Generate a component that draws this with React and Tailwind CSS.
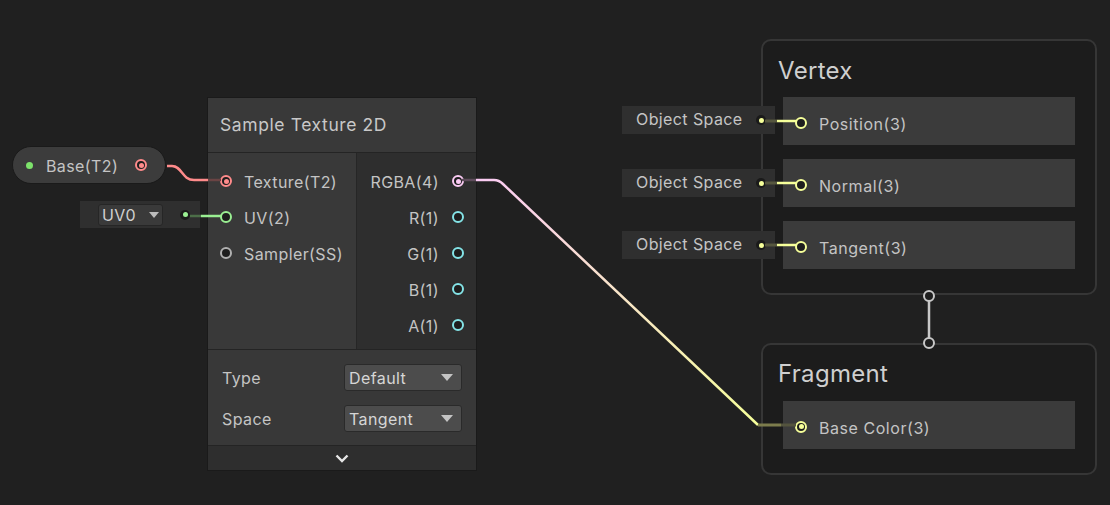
import React from 'react';

const font = { fontFamily: 'Inter, "Noto Sans", sans-serif' };

// port colours
const PINK_T2 = '#ff8b8b';
const GREEN = '#9aef92';
const YELLOW = '#f6ff9a';
const PINK_V4 = '#fbcbf4';
const CYAN = '#84e4e7';
const GREY = '#b0b0b0';

const Port = ({ color, filled }) => (
  <div
    className="w-[12px] h-[12px] rounded-full border-2 flex items-center justify-center bg-[#1e1e1e] shrink-0"
    style={{ borderColor: color }}
  >
    {filled && <div className="w-[5px] h-[5px] rounded-full" style={{ background: color }} />}
  </div>
);

const Dropdown = ({ value }) => (
  <div className="w-[118px] h-[27px] bg-[#4c4c4c] border border-[#2a2a2a] rounded-[3px] flex items-center justify-between pl-[4px] pr-[8px] text-[16px] tracking-[0.4px] text-[#d6d6d6]">
    <span>{value}</span>
    <svg width="12" height="7" viewBox="0 0 12 7">
      <path d="M0 0 L12 0 L6 7 Z" fill="#c4c4c4" />
    </svg>
  </div>
);

const SampleTexture = () => (
  <div className="absolute left-[208px] top-[98px] w-[268px] bg-[#2e2e2e] shadow-[0_0_0_1px_#1a1a1a]">
    <div className="h-[55px] bg-[#393939] flex items-center px-[12px] text-[17.5px] tracking-[0.6px] text-[#c8c8c8] border-b border-[#242424]">
      Sample Texture 2D
    </div>
    <div className="flex h-[196px]">
      <div className="w-[149px] bg-[#393939] pt-[10px] border-r border-[#262626]">
        {[
          ['Texture(T2)', PINK_T2, true],
          ['UV(2)', GREEN, false],
          ['Sampler(SS)', GREY, false],
        ].map(([label, color, filled]) => (
          <div key={label} className="h-[36px] flex items-center pl-[12px] gap-[12px] text-[16px] tracking-[0.4px] text-[#c4c4c4]">
            <Port color={color} filled={filled} />
            <span className="pt-[1px]">{label}</span>
          </div>
        ))}
      </div>
      <div className="flex-1 bg-[#2e2e2e] pt-[10px]">
        {[
          ['RGBA(4)', PINK_V4, true],
          ['R(1)', CYAN, false],
          ['G(1)', CYAN, false],
          ['B(1)', CYAN, false],
          ['A(1)', CYAN, false],
        ].map(([label, color, filled]) => (
          <div key={label} className="h-[36px] flex items-center justify-end pr-[12px] gap-[13px] text-[16px] tracking-[0.4px] text-[#c4c4c4]">
            <span className="pt-[1px]">{label}</span>
            <Port color={color} filled={filled} />
          </div>
        ))}
      </div>
    </div>
    <div className="bg-[#383838] border-t border-[#242424] px-[14px] pt-[14px] pb-[13px] flex flex-col gap-[14px]">
      <div className="flex items-center justify-between text-[16px] tracking-[0.4px] text-[#c4c4c4]">
        <span>Type</span>
        <Dropdown value="Default" />
      </div>
      <div className="flex items-center justify-between text-[16px] tracking-[0.4px] text-[#c4c4c4]">
        <span>Space</span>
        <Dropdown value="Tangent" />
      </div>
    </div>
    <div className="h-[25px] bg-[#2e2e2e] border-t border-[#242424] flex items-center justify-center">
      <svg width="14" height="9" viewBox="0 0 14 9">
        <path d="M1.5 1.5 L7 7 L12.5 1.5" fill="none" stroke="#e6e6e6" strokeWidth="2.4" />
      </svg>
    </div>
  </div>
);

const Slot = ({ label, filled }) => (
  <div className="h-[48px] bg-[#3b3b3b] flex items-center pl-[12px] pt-[3px] gap-[12px] text-[16px] tracking-[0.55px] text-[#c4c4c4]">
    <Port color={YELLOW} filled={filled} />
    <span className="pt-[2px]">{label}</span>
  </div>
);

const ObjectSpace = ({ top }) => (
  <div
    className="absolute left-[622px] w-[153px] h-[28px] bg-[#2f2f2f] flex items-center justify-between pl-[14px] pr-[9px] text-[16px] tracking-[0.4px] text-[#c4c4c4]"
    style={{ top }}
  >
    <span className="-mt-[2px]">Object Space</span>
    <div className="w-[10px] h-[10px] rounded-full bg-[#1a1a1a] flex items-center justify-center">
      <div className="w-[5px] h-[5px] rounded-full" style={{ background: YELLOW }} />
    </div>
  </div>
);

export default function App() {
  return (
    <div className="relative w-[1110px] h-[505px] bg-[#202020] overflow-hidden" style={font}>
      {/* Base property pill */}
      <div className="absolute left-[12px] top-[146px] w-[154px] h-[38px] rounded-full bg-[#3c3c3c] border border-[#1a1a1a] flex items-center pl-[13px] pr-[18px] text-[16px] tracking-[0.4px] text-[#c4c4c4]">
        <div className="w-[7px] h-[7px] rounded-full bg-[#7de36b]" />
        <span className="ml-[13px] flex-1 pt-[2px]">Base(T2)</span>
        <Port color={PINK_T2} filled />
      </div>

      {/* UV0 input */}
      <div className="absolute left-[80px] top-[201px] w-[120px] h-[27px] bg-[#2f2f2f] flex items-center pl-[18px] pr-[10px] justify-between">
        <div className="h-[22px] w-[65px] bg-[#3a3a3a] border border-[#262626] rounded-[3px] flex items-center justify-between px-[3px] text-[16px] tracking-[0.4px] text-[#d0d0d0]">
          <span>UV0</span>
          <svg width="10" height="6" viewBox="0 0 10 6">
            <path d="M0 0 L10 0 L5 6 Z" fill="#bcbcbc" />
          </svg>
        </div>
        <div className="w-[10px] h-[10px] rounded-full bg-[#1a1a1a] flex items-center justify-center">
          <div className="w-[5px] h-[5px] rounded-full bg-[#9aef92]" />
        </div>
      </div>

      <SampleTexture />

      {/* Vertex context */}
      <div className="absolute left-[761px] top-[39px] w-[336px] h-[256px] rounded-[10px] border-2 border-[#363636] bg-[#1c1c1c]">
        <div className="h-[56px] flex items-center pl-[15px] pt-[4px] text-[24px] tracking-[0.3px] text-[#cfcfcf]">Vertex</div>
        <div className="flex flex-col gap-[14px] px-[20px]">
          <Slot label="Position(3)" />
          <Slot label="Normal(3)" />
          <Slot label="Tangent(3)" />
        </div>
      </div>

      {/* Fragment context */}
      <div className="absolute left-[761px] top-[343px] w-[336px] h-[132px] rounded-[10px] border-2 border-[#363636] bg-[#1c1c1c]">
        <div className="h-[56px] flex items-center pl-[15px] pt-[2px] text-[24px] tracking-[0.3px] text-[#cfcfcf]">Fragment</div>
        <div className="px-[20px]">
          <Slot label="Base Color(3)" filled />
        </div>
      </div>

      <ObjectSpace top="106px" />
      <ObjectSpace top="169px" />
      <ObjectSpace top="231px" />

      {/* wires */}
      <svg className="absolute left-0 top-0 pointer-events-none" width="1110" height="505">
        <defs>
          <linearGradient id="rgbaWire" gradientUnits="userSpaceOnUse" x1="476" y1="180" x2="758" y2="425">
            <stop offset="0" stopColor={PINK_V4} />
            <stop offset="1" stopColor={YELLOW} />
          </linearGradient>
        </defs>
        {/* Base -> Texture */}
        <path d="M167 166 L172 166 C182 166 182 180 194 180 L208 180" fill="none" stroke={PINK_T2} strokeWidth="2.5" />
        <path d="M208 180 L221 180" stroke="#6a4444" strokeWidth="2.5" />
        {/* UV0 -> UV */}
        <path d="M190 216 L201 216" stroke="#4c6e48" strokeWidth="2.5" />
        <path d="M201 216 L221 216" stroke={GREEN} strokeWidth="2.5" />
        {/* RGBA -> Base Color */}
        <path d="M462 180 L476 180" stroke="#5e4c5b" strokeWidth="2.5" />
        <path d="M476 180 L494 180 Q499 180 503 184 L758 425" fill="none" stroke="url(#rgbaWire)" strokeWidth="2.5" />
        <path d="M758 425 L781 425" stroke="#7c7c4c" strokeWidth="3" />
        <path d="M781 425 L796 425" stroke="#54543e" strokeWidth="3" />
        {/* Object space -> vertex slots */}
        {[121, 183, 245].map((y) => (
          <g key={y}>
            <path d={`M765 ${y} L777 ${y}`} stroke="#56573f" strokeWidth="3" />
            <path d={`M777 ${y} L796 ${y}`} stroke={YELLOW} strokeWidth="2.5" />
          </g>
        ))}
        {/* vertex -> fragment link */}
        <path d="M929 301 L929 338" stroke="#c8c8c8" strokeWidth="2.5" />
        <circle cx="929" cy="296" r="5" fill="#1e1e1e" stroke="#c8c8c8" strokeWidth="2" />
        <circle cx="929" cy="343" r="5" fill="#1e1e1e" stroke="#c8c8c8" strokeWidth="2" />
      </svg>
    </div>
  );
}
